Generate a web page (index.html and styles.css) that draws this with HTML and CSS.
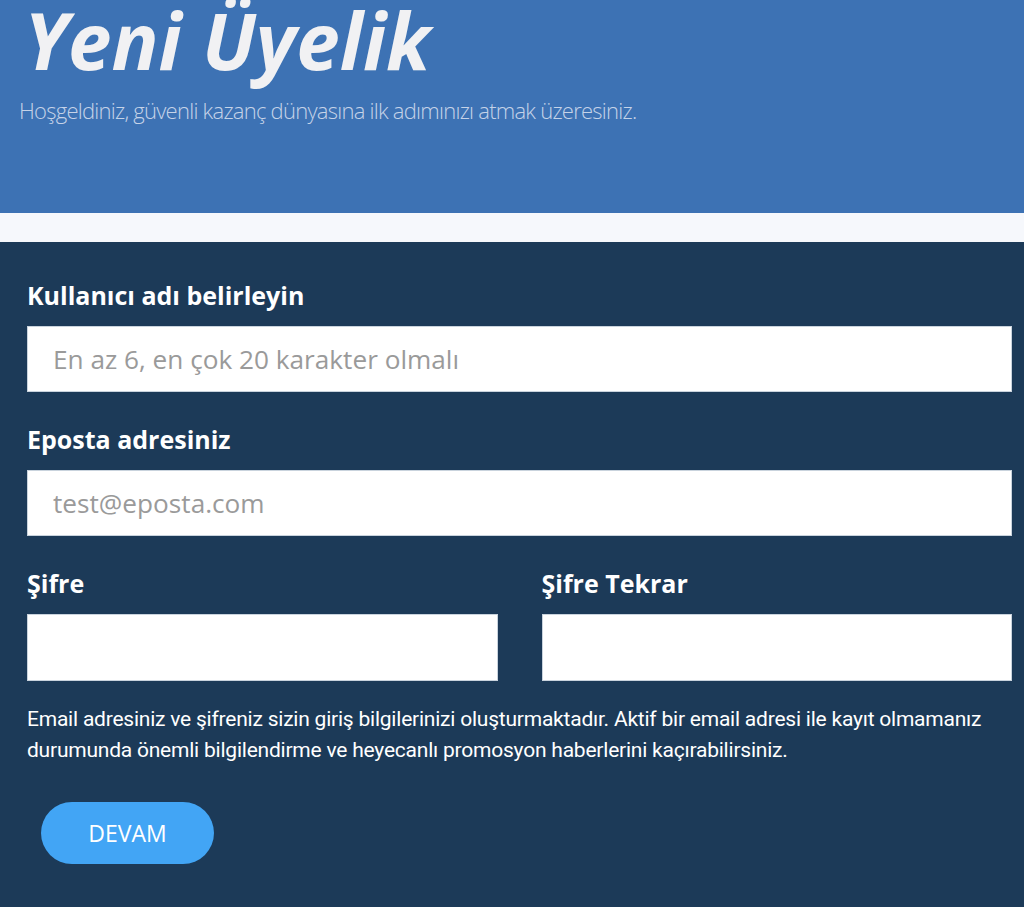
FILE: index.html
```html
<!DOCTYPE html>
<html lang="tr">
<head>
<meta charset="utf-8">
<title>Yeni Üyelik</title>
<link rel="stylesheet" href="styles.css">
</head>
<body>
<header class="hero">
  <h1 class="hero-title">Yeni Üyelik</h1>
  <p class="hero-sub">Hoşgeldiniz, güvenli kazanç dünyasına ilk adımınızı atmak üzeresiniz.</p>
</header>
<div class="strip"></div>
<main class="form-area">
  <form class="reg-form">
    <div class="field">
      <label class="label" for="u">Kullanıcı adı belirleyin</label>
      <input class="input" id="u" type="text" placeholder="En az 6, en çok 20 karakter olmalı">
    </div>
    <div class="field">
      <label class="label" for="e">Eposta adresiniz</label>
      <input class="input" id="e" type="email" placeholder="test@eposta.com">
    </div>
    <div class="row">
      <div class="field">
        <label class="label" for="p1">Şifre</label>
        <input class="input" id="p1" type="password">
      </div>
      <div class="field">
        <label class="label" for="p2">Şifre Tekrar</label>
        <input class="input" id="p2" type="password">
      </div>
    </div>
    <p class="note">Email adresiniz ve şifreniz sizin giriş bilgilerinizi oluşturmaktadır. Aktif bir email adresi ile kayıt olmamanız durumunda önemli bilgilendirme ve heyecanlı promosyon haberlerini kaçırabilirsiniz.</p>
    <button class="btn" type="button">DEVAM</button>
  </form>
</main>
</body>
</html>
```
FILE: styles.css
```css
* { box-sizing: border-box; }
html, body { margin: 0; padding: 0; }
body {
  background: #1c3a58;
  font-family: "Open Sans", "Liberation Sans", sans-serif;
  min-height: 907px;
}
.hero {
  background: #3d72b4;
  height: 213px;
  padding: 0;
  overflow: hidden;
}
.hero-title {
  margin: 0 0 0 24px;
  font-family: "Open Sans", sans-serif;
  font-style: italic;
  font-weight: 700;
  font-size: 78px;
  line-height: 80px;
  color: #f1f1f3;
}
.hero-sub {
  margin: 15px 0 0 19px;
  font-family: "Open Sans", sans-serif;
  font-weight: 300;
  font-size: 22px;
  line-height: 30px;
  letter-spacing: -0.75px;
  color: #c5d3e8;
}
.strip {
  height: 29px;
  background: #f6f8fc;
}
.form-area {
  padding: 36px 12px 40px 27px;
}
.reg-form { display: flex; flex-direction: column; }
.field { display: flex; flex-direction: column; margin-bottom: 30px; }
.label {
  font-weight: 700;
  font-size: 25px;
  line-height: 34px;
  color: #ffffff;
  margin-bottom: 14px;
}
.input {
  height: 66px;
  width: 100%;
  background: #ffffff;
  border: 1px solid #c9d3dd;
  padding: 0 25px;
  font-family: "Open Sans", sans-serif;
  font-size: 26.2px;
  color: #333;
  outline: none;
}
.input::placeholder { color: #9a9a9a; }
.row {
  display: grid;
  grid-template-columns: 1fr 1fr;
  column-gap: 44px;
}
.row .field { margin-bottom: 23px; }
.row .input { height: 67px; }
.note {
  margin: 0;
  font-family: Roboto, "Liberation Sans", sans-serif;
  font-size: 21px;
  line-height: 31px;
  letter-spacing: -0.22px;
  color: #ffffff;
}
.btn {
  align-self: flex-start;
  margin: 36px 0 0 14px;
  width: 173px;
  height: 62px;
  border: none;
  border-radius: 31px;
  background: #42a5f5;
  color: #ffffff;
  font-family: "Open Sans", sans-serif;
  font-size: 23px;
  font-weight: 400;
  cursor: pointer;
}
```
